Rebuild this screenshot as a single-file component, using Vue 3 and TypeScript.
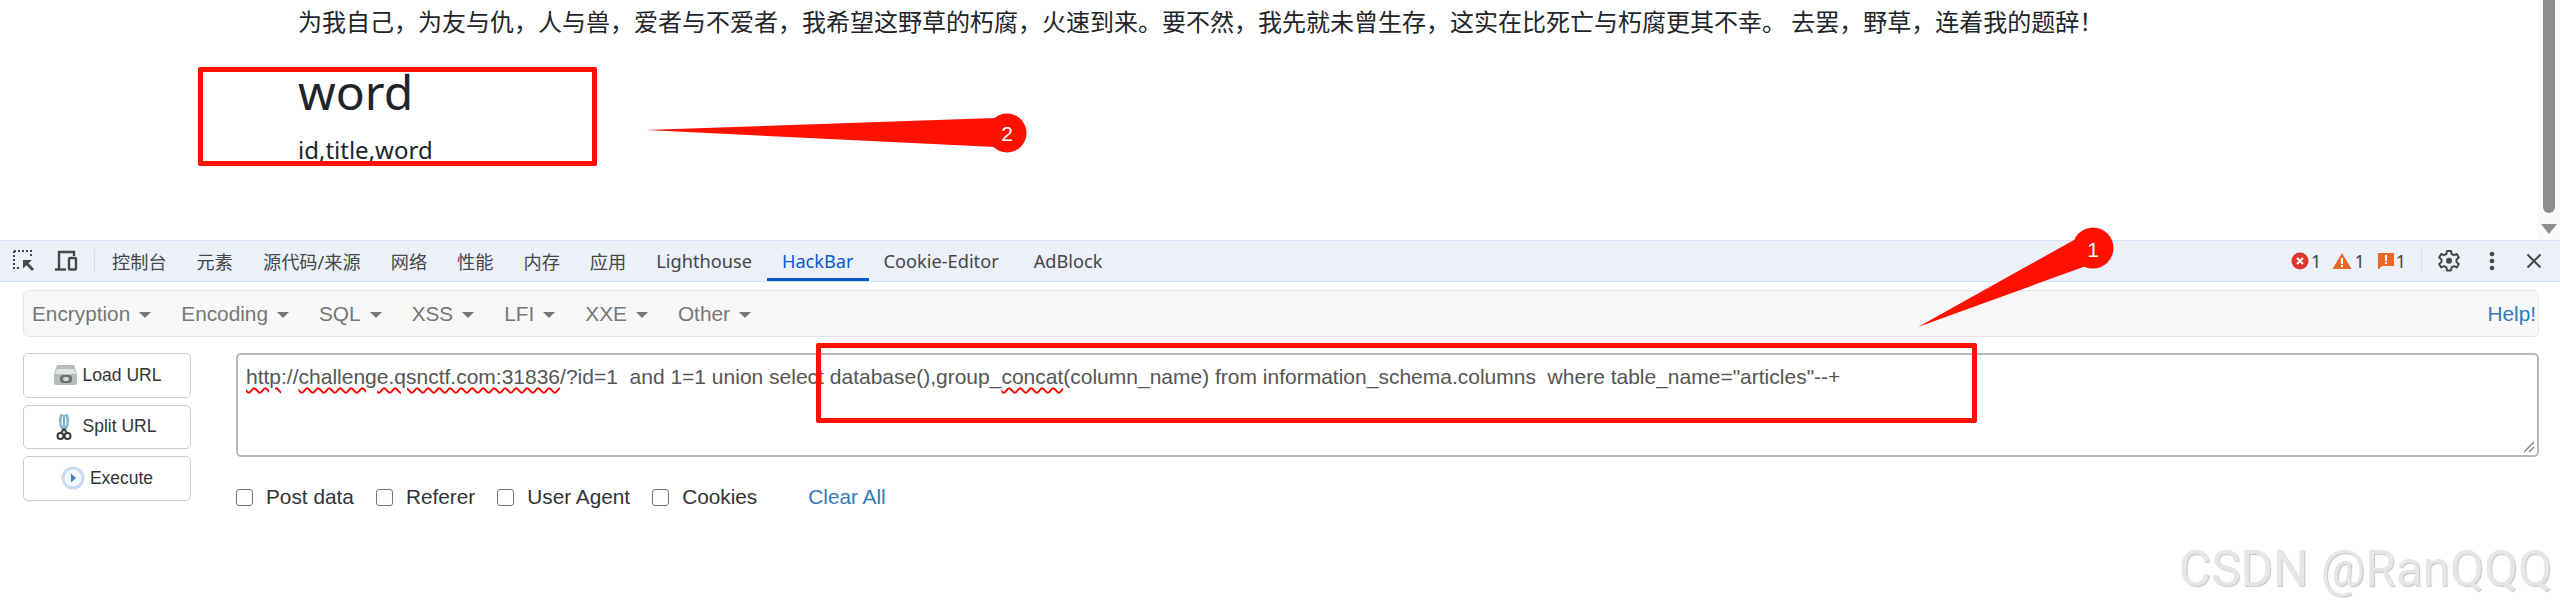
<script setup lang="ts">
const tabs: string[] = ['控制台', '元素', '源代码/来源', '网络', '性能', '内存', '应用', 'Lighthouse', 'HackBar', 'Cookie-Editor', 'AdBlock']
const menus: string[] = ['Encryption', 'Encoding', 'SQL', 'XSS', 'LFI', 'XXE', 'Other']
const checks: string[] = ['Post data', 'Referer', 'User Agent', 'Cookies']
const urlMiddle = '/?id=1  and 1=1 union select database(),group_'
const urlTail = '(column_name) from information_schema.columns  where table_name="articles"--+'
</script>

<template>
  <div class="page">
    <section class="content">
      <div class="article">
        <p class="poem">为我自己，为友与仇，人与兽，爱者与不爱者，我希望这野草的朽腐，火速到来。要不然，我先就未曾生存，这实在比死亡与朽腐更其不幸。 去罢，野草，连着我的题辞！</p>
        <h1 class="title">word</h1>
        <p class="cols">id,title,word</p>
      </div>
      <div class="scrollbar">
        <div class="thumb"></div>
        <div class="arrow"></div>
      </div>
    </section>

    <nav class="devbar">
      <svg class="dicon" width="24" height="24" viewBox="0 0 24 24" fill="none" stroke="#474747" stroke-width="2">
        <path d="M2 2h17v6M2 2v17h6" stroke-dasharray="2 2" />
        <path d="M11 11h9l-3.500 3.200 5.500 5.800-2 2-5.500-5.800-3.500 3.300z" fill="#474747" stroke="none" />
      </svg>
      <svg class="dicon second" width="24" height="24" viewBox="0 0 24 24" fill="none" stroke="#474747" stroke-width="2.400">
        <path d="M5 20V3h15v4" />
        <path d="M1 20.500h11" />
        <rect x="15" y="9" width="7" height="11.500" rx="1" />
      </svg>
      <span class="vline"></span>
      <a v-for="t in tabs" :key="t" class="tab" :class="{ active: t === 'HackBar' }">{{ t }}</a>
      <div class="status">
        <svg width="18" height="18" viewBox="0 0 18 18"><circle cx="9" cy="9" r="8.500" fill="#dc362e" /><path d="M6 6l6 6M12 6l-6 6" stroke="#fff" stroke-width="2" /></svg>
        <span class="num">1</span>
        <svg class="s2" width="20" height="18" viewBox="0 0 20 18"><path d="M10 1l9.500 16H.5z" fill="#e8682a" /><path d="M9 6h2v6H9zM9 13h2v2H9z" fill="#fff" /></svg>
        <span class="num">1</span>
        <svg class="s3" width="16" height="18" viewBox="0 0 16 18"><path d="M0 1h16v13H4l-3 3H0z" fill="#e8682a" /><path d="M7 3h2v6H7zM7 10h2v2H7z" fill="#fff" /></svg>
        <span class="num">1</span>
        <span class="vline v2"></span>
        <svg class="gear" width="24" height="24" viewBox="0 0 24 24" fill="none" stroke="#474747" stroke-width="2">
          <path d="M10 2h4l.6 3 2.400 1.200 2.800-1.200 2 3.500-2.300 1.900v2.600l2.300 1.900-2 3.500-2.800-1.200-2.400 1.200-.6 3h-4l-.6-3L7 17.200l-2.800 1.200-2-3.500 2.300-1.900v-2.600L2.200 8.500l2-3.500L7 6.200 9.400 5z" stroke-linejoin="round" />
          <circle cx="12" cy="11.700" r="3" fill="#474747" stroke="none" />
        </svg>
        <svg class="dots" width="6" height="20" viewBox="0 0 6 20" fill="#474747"><circle cx="3" cy="3" r="2.300" /><circle cx="3" cy="10" r="2.300" /><circle cx="3" cy="17" r="2.300" /></svg>
        <svg class="close" width="16" height="16" viewBox="0 0 16 16" stroke="#474747" stroke-width="2"><path d="M1.500 1.500l13 13M14.500 1.500l-13 13" /></svg>
      </div>
    </nav>

    <section class="hackbar">
      <div class="menu">
        <span v-for="m in menus" :key="m" class="menu-item">{{ m }}<i class="caret"></i></span>
        <a class="help">Help!</a>
      </div>
      <div class="work">
        <div class="buttons">
          <button class="btn load">
            <svg width="25" height="22" viewBox="0 0 25 22">
              <path d="M4 1h17l3 9v9a2 2 0 0 1-2 2H3a2 2 0 0 1-2-2v-9z" fill="#b9bcbd" />
              <path d="M4 5h17l2 5H2z" fill="#e4e5e5" />
              <rect x="7" y="11" width="12" height="8" rx="3" fill="#6d7172" />
              <rect x="10" y="13" width="6" height="4" rx="2" fill="#d5d7d7" />
            </svg>
            <span>Load URL</span>
          </button>
          <button class="btn split">
            <svg width="16" height="28" viewBox="0 0 16 28" fill="none">
              <path d="M6 1C3 6 4 12 7 17M10 1c3 5 2 11-1 16" stroke="#7fb0cf" stroke-width="2.500" />
              <path d="M8 2v12" stroke="#7fb0cf" stroke-width="2" />
              <circle cx="4.500" cy="23" r="3" stroke="#3c3c3c" stroke-width="2" />
              <circle cx="11.500" cy="23" r="3" stroke="#3c3c3c" stroke-width="2" />
              <path d="M5 20l3-4 3 4" stroke="#3c3c3c" stroke-width="2" />
            </svg>
            <span>Split URL</span>
          </button>
          <button class="btn exec">
            <svg width="24" height="24" viewBox="0 0 24 24">
              <circle cx="12" cy="12" r="11.500" fill="#c7dbf1" />
              <circle cx="12" cy="12" r="8.500" fill="#f4f8fc" />
              <path d="M10 7.500l5 4.500-5 4.500z" fill="#4a7fc0" />
            </svg>
            <span>Execute</span>
          </button>
        </div>
        <div class="main">
          <div class="urlbox"><span class="sp">http</span>://<span class="sp">challenge.qsnctf.com:31836</span>{{ urlMiddle }}<span class="sp">concat</span>{{ urlTail }}<svg class="grip" width="12" height="12" viewBox="0 0 12 12" stroke="#777" stroke-width="1.200"><path d="M1 11L11 1M6 11l5-5" /></svg></div>
          <div class="checks">
            <label v-for="c in checks" :key="c" class="check"><i class="cb"></i>{{ c }}</label>
            <a class="clear">Clear All</a>
          </div>
        </div>
      </div>
    </section>

    <div class="mark box-a"></div>
    <div class="mark box-b"></div>
    <svg class="annot" width="2560" height="613" viewBox="0 0 2560 613">
      <path d="M646 130L995 118L995 147Z" fill="#ff1100" />
      <circle cx="1007" cy="133" r="19.500" fill="#ff1100" />
      <path d="M1918 327L2074 240L2086 266Z" fill="#ff1100" />
      <circle cx="2093" cy="248" r="20.500" fill="#ff1100" />
      <text x="1007" y="141" class="badge">2</text>
      <text x="2093" y="257" class="badge">1</text>
    </svg>
    <div class="watermark">CSDN @RanQQQ</div>
  </div>
</template>

<style>
html, body { margin: 0; padding: 0; background: #fff; overflow: hidden; }
</style>

<style scoped>
.page { position: relative; width: 2560px; height: 613px; overflow: hidden; background: #fff; font-family: "Liberation Sans", Arial, sans-serif; }
.content { display: flex; height: 240px; }
.article { flex: 1; padding-left: 298px; color: #212529; font-family: "Noto Sans", "Noto Sans CJK SC", sans-serif; }
.poem { margin: 0; padding-top: 3px; font-size: 24px; line-height: 36px; font-family: "Noto Sans CJK SC", sans-serif; }
.title { margin: 24px 0 0; font-size: 48px; line-height: 58px; font-weight: 400; }
.cols { margin: 11px 0 0; font-size: 24px; line-height: 36px; }
.scrollbar { width: 22px; background: #fafafa; display: flex; flex-direction: column; align-items: center; }
.thumb { width: 12px; height: 213px; background: #8e8e8e; border-radius: 0 0 6px 6px; }
.arrow { margin-top: 11px; width: 0; height: 0; border-left: 8px solid transparent; border-right: 8px solid transparent; border-top: 10px solid #8e8e8e; }

.devbar { display: flex; align-items: center; height: 42px; box-sizing: border-box; background: #ebf0f9; border-top: 1px solid #d3e3fd; border-bottom: 1px solid #d3e3fd; padding-left: 12px; font-family: "Noto Sans", "Noto Sans CJK SC", sans-serif; font-size: 18.200px; color: #474747; }
.second { margin-left: 18px; }
.vline { width: 1px; height: 24px; background: #cfdff8; margin-left: 16px; margin-right: 2px; }
.tab { height: 100%; box-sizing: border-box; display: flex; align-items: center; padding: 0 15px; white-space: nowrap; }
.tab.active { color: #0b57d0; box-shadow: inset 0 -3px 0 #0b57d0; }
.tab:last-of-type { margin-left: 5px; }
.status { margin-left: auto; display: flex; align-items: center; padding-right: 18px; }
.num { font-size: 18px; margin-left: 2px; color: #474747; }
.s2 { margin-left: 11px; }
.s3 { margin-left: 13px; }
.v2 { margin-left: 15px; margin-right: 0; height: 24px; }
.gear { margin-left: 15px; }
.dots { margin-left: 28px; }
.close { margin-left: 31px; }

.hackbar { padding: 8px 21px 0 23px; color: #333; }
.menu { display: flex; align-items: center; height: 47px; box-sizing: border-box; background: #f8f8f8; border: 1px solid #e7e7e7; border-radius: 6px; padding: 0 2px 0 8px; font-size: 20.800px; color: #777; }
.menu-item { display: flex; align-items: center; margin-right: 30px; }
.caret { margin-left: 9px; width: 0; height: 0; border-left: 6px solid transparent; border-right: 6px solid transparent; border-top: 6px solid #777; margin-top: 2px; }
.help { margin-left: auto; color: #337ab7; }
.work { display: flex; margin-top: 16px; }
.buttons { width: 168px; display: flex; flex-direction: column; gap: 7px; }
.btn { height: 44.500px; box-sizing: border-box; display: flex; align-items: center; justify-content: center; gap: 5px; background: #fff; border: 1px solid #ccc; border-radius: 5px; font-family: inherit; font-size: 17.500px; color: #333; padding: 0; }
.btn.split { gap: 11px; padding-right: 2px; }
.main { margin-left: 45px; flex: 1; }
.urlbox { position: relative; height: 104px; box-sizing: border-box; border: 2px solid #b8b8b8; border-radius: 5px; padding: 8px; font-size: 21px; line-height: 28px; color: #555; white-space: pre; }
.sp { text-decoration: underline wavy #f00 1.500px; text-underline-offset: 3px; }
.grip { position: absolute; right: 2px; bottom: 2px; }
.checks { display: flex; align-items: center; margin-top: 28px; font-size: 20.800px; }
.check { display: flex; align-items: center; margin-right: 22px; }
.cb { width: 15px; height: 15px; border: 1.500px solid #767676; border-radius: 3px; margin-right: 13px; }
.clear { margin-left: 29px; color: #337ab7; }

.mark { position: absolute; box-sizing: border-box; border: 5px solid #ff1100; border-radius: 2px; }
.box-a { left: 198px; top: 67px; width: 399px; height: 99px; }
.box-b { left: 816px; top: 343px; width: 1161px; height: 80px; }
.annot { position: absolute; left: 0; top: 0; }
.badge { font-family: "Liberation Sans", sans-serif; font-size: 21px; fill: #fff; text-anchor: middle; }
.watermark { position: absolute; left: 2179px; top: 539px; font-family: Roboto, "Liberation Sans", sans-serif; font-size: 49.500px; line-height: 60px; color: #e6e6e6; text-shadow: 1px 1px 1px #c4c4c4; white-space: nowrap; }
</style>
